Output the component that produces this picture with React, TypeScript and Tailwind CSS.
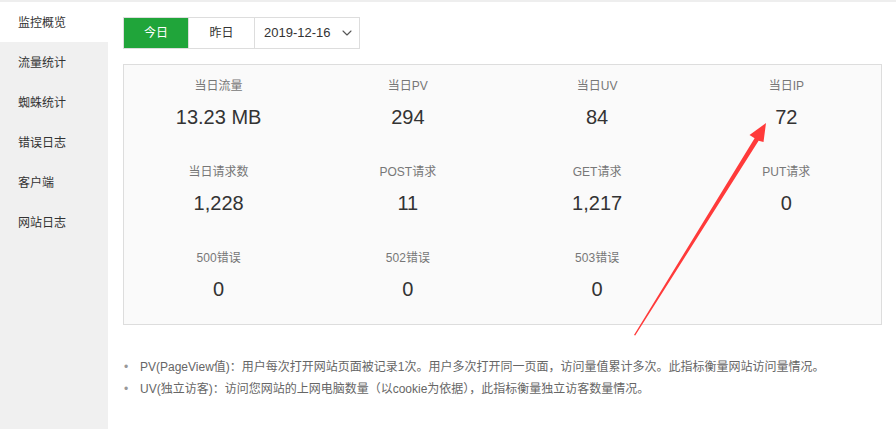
import { ChevronDown } from "lucide-react"

type Stat = { label: string; value: string }

const MENU = ["监控概览", "流量统计", "蜘蛛统计", "错误日志", "客户端", "网站日志"]

const STATS: Stat[] = [
  { label: "当日流量", value: "13.23 MB" },
  { label: "当日PV", value: "294" },
  { label: "当日UV", value: "84" },
  { label: "当日IP", value: "72" },
  { label: "当日请求数", value: "1,228" },
  { label: "POST请求", value: "11" },
  { label: "GET请求", value: "1,217" },
  { label: "PUT请求", value: "0" },
  { label: "500错误", value: "0" },
  { label: "502错误", value: "0" },
  { label: "503错误", value: "0" },
]

const NOTES = [
  "PV(PageView值)：用户每次打开网站页面被记录1次。用户多次打开同一页面，访问量值累计多次。此指标衡量网站访问量情况。",
  "UV(独立访客)：访问您网站的上网电脑数量（以cookie为依据），此指标衡量独立访客数量情况。",
]

export default function App() {
  return (
    <div className="relative flex h-[429px] w-[896px] overflow-hidden border-t-2 border-[#eeeeee] bg-white font-['Liberation_Sans','Noto_Sans_CJK_SC',sans-serif] text-[#333]">
      {/* sidebar */}
      <aside className="w-[108px] shrink-0 bg-[#f0f0f0]">
        {MENU.map((m, i) => (
          <div
            key={m}
            className={
              i === 0
                ? "h-10 bg-white pl-[18px] pt-px text-[12px] leading-10 text-[#333]"
                : "h-10 pl-[18px] pt-px text-[12px] leading-10 text-[#333]"
            }
          >
            {m}
          </div>
        ))}
      </aside>

      {/* main */}
      <main className="flex-1 pl-[15px] pr-[14px] pt-[15px]">
        <div className="flex h-[32px] w-fit border border-[#dddddd] text-[12px]">
          <button className="w-[64px] bg-[#20a53a] text-white">今日</button>
          <button className="w-[66px] border-l border-[#dddddd] bg-white text-[#333]">昨日</button>
          <div className="flex w-[105px] items-center gap-[8px] border-l border-[#dddddd] pl-[9px] text-[13px] text-[#333]">
            2019-12-16
            <ChevronDown className="h-4 w-4 text-[#555]" strokeWidth={1.6} />
          </div>
        </div>

        <div className="mt-[15px] grid h-[261px] grid-cols-4 content-start gap-y-[34px] border border-[#dddddd] bg-[#fafafa] pt-[13px]">
          {STATS.map((s) => (
            <div key={s.label} className="flex h-[52px] flex-col items-center">
              <div className="h-4 text-[12px] leading-4 text-[#777]">{s.label}</div>
              <div className="mt-[11px] h-6 text-[20px] leading-6 text-[#333]">{s.value}</div>
            </div>
          ))}
        </div>

        <ul className="mt-[31px] text-[12px] leading-[22px] text-[#666]">
          {NOTES.map((n) => (
            <li key={n} className="flex">
              <span className="w-[17px] shrink-0 pl-[1px] text-[#999]">•</span>
              <span>{n}</span>
            </li>
          ))}
        </ul>
      </main>

      {/* annotation arrow */}
      <svg
        className="pointer-events-none absolute left-0 top-0"
        width="896"
        height="429"
        viewBox="0 0 896 429"
      >
        <polygon
          points="634,333 754.6,136.2 749.5,133 766,121 763.5,140 758.6,138.8 635.2,333.6"
          fill="#ff3a3a"
        />
      </svg>
    </div>
  )
}
